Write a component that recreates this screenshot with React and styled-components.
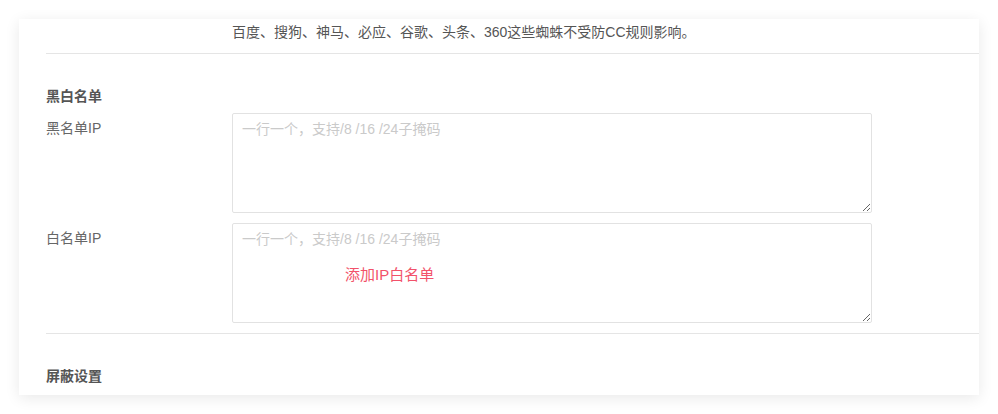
import React from 'react';
import styled, { createGlobalStyle } from 'styled-components';

const GlobalStyle = createGlobalStyle`
  body {
    margin: 0;
    background: #fff;
    font-family: "Liberation Sans", "Noto Sans CJK SC", sans-serif;
  }
`

const Page = styled.div`
  padding: 19px;
  width: 998px;
  height: 414px;
  box-sizing: border-box;
  overflow: hidden;
`

const Card = styled.div`
  width: 960px;
  height: 376px;
  background: #fff;
  box-shadow: 0 3px 14px rgba(0, 0, 0, 0.09);
  padding-left: 27px;
  box-sizing: border-box;
  overflow: hidden;
`

const Section = styled.div`
  border-bottom: ${p => p.last ? 'none' : '1px solid #e5e5e5'};
  padding-bottom: ${p => p.pb || 10}px;
`

const SectionTitle = styled.div`
  padding-top: 33px;
  margin-bottom: 8px;
  font-size: 14px;
  line-height: 18px;
  font-weight: bold;
  color: #555;
`

const Row = styled.div`
  display: grid;
  grid-template-columns: 186px 640px;
  margin-top: ${p => p.mt || 0}px;
`

const Label = styled.div`
  padding-top: ${p => p.pt ?? 6}px;
  font-size: 14px;
  line-height: 18px;
  color: #666;
`

const Note = styled.div`
  padding-top: 4px;
  font-size: 14px;
  line-height: 18px;
  color: #555;
  white-space: nowrap;
`

const Field = styled.div`
  position: relative;
`

const TextArea = styled.textarea`
  display: block;
  width: 640px;
  height: 100px;
  box-sizing: border-box;
  border: 1px solid #e2e2e2;
  border-radius: 2px;
  padding: 6px 9px;
  font-family: "Liberation Sans", "Noto Sans CJK SC", sans-serif;
  font-size: 14px;
  line-height: 18px;
  color: #555;
  outline: none;
  &::placeholder {
    color: #cacaca;
  }
`

const Hint = styled.span`
  position: absolute;
  left: 113px;
  top: 42px;
  font-size: 15px;
  line-height: 20px;
  color: #f2526a;
  pointer-events: none;
`

const App = () => (
  <>
    <GlobalStyle />
    <Page>
      <Card>
        <Section pb={12}>
          <Row>
            <div />
            <Note>百度、搜狗、神马、必应、谷歌、头条、360这些蜘蛛不受防CC规则影响。</Note>
          </Row>
        </Section>
        <Section>
          <SectionTitle>黑白名单</SectionTitle>
          <Row>
            <Label>黑名单IP</Label>
            <Field>
              <TextArea placeholder="一行一个，支持/8 /16 /24子掩码" />
            </Field>
          </Row>
          <Row mt={10}>
            <Label>白名单IP</Label>
            <Field>
              <TextArea placeholder="一行一个，支持/8 /16 /24子掩码" />
              <Hint>添加IP白名单</Hint>
            </Field>
          </Row>
        </Section>
        <Section last>
          <SectionTitle>屏蔽设置</SectionTitle>
        </Section>
      </Card>
    </Page>
  </>
)

export default App
